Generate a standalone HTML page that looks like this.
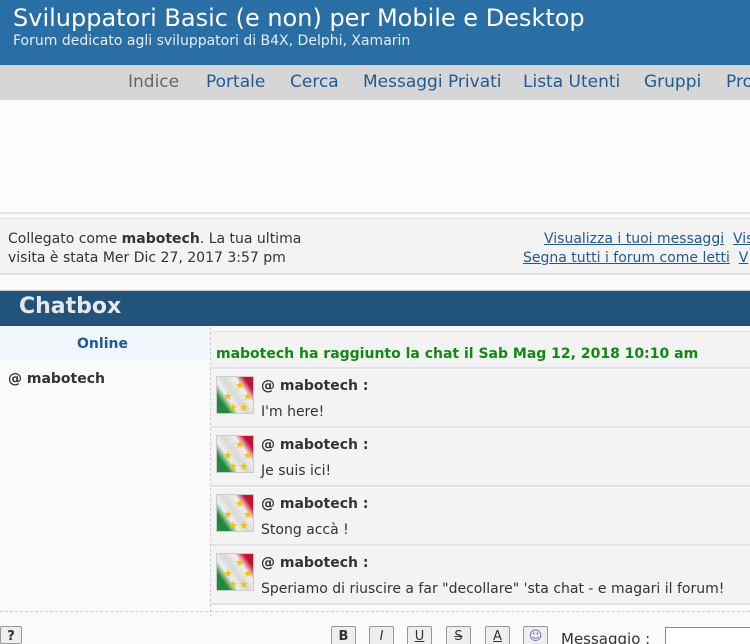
<!DOCTYPE html>
<html style="overflow:hidden"><head><meta charset="utf-8"><style>
*{margin:0;padding:0;box-sizing:border-box}
html,body{width:750px;height:644px;overflow:hidden}
body{background:#fafafa;font-family:"DejaVu Sans","Liberation Sans",sans-serif;position:relative;color:#333}
#w{position:absolute;left:0;top:0;width:750px;height:644px;overflow:hidden}
.a{position:absolute;white-space:nowrap}
#hd{left:0;top:0;width:750px;height:65px;background:#2a6ea6}
#nav{left:0;top:65px;width:750px;height:35px;background:#d6d6d6;font-size:17px;color:#1f5a94;overflow:hidden}
#nav span{position:absolute;top:7px}
.lk{color:#1f5a94;text-decoration:underline}
.msg{left:211px;width:539px;height:58px;background:#f3f3f3;border-bottom:2px solid #dde3ea}
.av{position:absolute;left:5px;top:6px;width:38px;height:38px;border:1px solid #ccc;background:linear-gradient(235deg,#c8102e 0,#c8102e 15%,#f0f0f0 30%,#d8d8d8 50%,#f0f0f0 65%,#1f8a3a 80%,#1f8a3a 100%)}
.av i{position:absolute;color:#f2c200;font-size:11px;font-style:normal}
.nm{position:absolute;left:50px;top:8px;font-weight:bold;font-size:14px;color:#333}
.tx{position:absolute;left:50px;top:34px;font-size:14px;color:#333}
.btn{position:absolute;top:626px;width:25px;height:22px;border:1px solid #999;background:#eee;font-size:13px;text-align:center;line-height:20px;border-radius:2px}
</style></head><body><div id="w">
<div class="a" id="hd"></div>
<div class="a" style="left:13px;top:4px;font-size:24px;color:#fff">Sviluppatori Basic (e non) per Mobile e Desktop</div>
<div class="a" style="left:13px;top:33px;font-size:14px;color:#e4eef7">Forum dedicato agli sviluppatori di B4X, Delphi, Xamarin</div>
<div class="a" id="nav"><span style="left:128px;color:#666">Indice</span><span style="left:206px">Portale</span><span style="left:290px">Cerca</span><span style="left:363px">Messaggi Privati</span><span style="left:523px">Lista Utenti</span><span style="left:644px">Gruppi</span><span style="left:726px">Pro</span></div>
<div class="a" style="left:0;top:102px;width:750px;height:112px;background:#fcfcfc;border-bottom:2px solid #e4e4e4"></div>
<div class="a" style="left:0;top:218px;width:750px;height:57px;background:#f3f3f3;border-top:1px solid #ddd;border-bottom:2px solid #ddd"></div>
<div class="a" style="left:8px;top:230px;font-size:14px;line-height:19px">Collegato come <b>mabotech</b>. La tua ultima<br>visita è stata Mer Dic 27, 2017 3:57 pm</div>
<div class="a" style="left:544px;top:231px;font-size:14px"><span class="lk">Visualizza i tuoi messaggi</span>&nbsp; <span class="lk">Vis</span></div>
<div class="a" style="left:523px;top:250px;font-size:14px"><span class="lk">Segna tutti i forum come letti</span>&nbsp; <span class="lk">V</span></div>
<div class="a" style="left:0;top:290px;width:750px;height:36px;background:#22547b;border-top:1px solid #ccc"></div>
<div class="a" style="left:19px;top:294px;font-size:22px;font-weight:bold;color:#e8e8e8">Chatbox</div>
<div class="a" style="left:0;top:327px;width:210px;height:33px;background:#f0f6fb"></div>
<div class="a" style="left:0;top:336px;width:205px;text-align:center;font-size:14px;font-weight:bold;color:#1f5a94">Online</div>
<div class="a" style="left:8px;top:371px;font-size:14px;font-weight:bold">@ mabotech</div>
<div class="a" style="left:210px;top:327px;height:290px;border-left:1px dashed #ccc"></div>
<div class="a" style="left:211px;top:331px;width:539px;height:38px;background:#f3f3f3;border-top:1px solid #dde3ea;border-bottom:2px solid #dde3ea"></div>
<div class="a" style="left:216px;top:346px;font-size:14px;font-weight:bold;color:#108a10">mabotech ha raggiunto la chat il Sab Mag 12, 2018 10:10 am</div>
<div class="a msg" style="top:370px"><div class="av"><i style="left:18px;top:2px">★</i><i style="left:6px;top:13px">★</i><i style="left:26px;top:13px">★</i><i style="left:11px;top:24px">★</i><i style="left:22px;top:24px">★</i></div><div class="nm">@ mabotech :</div><div class="tx">I'm here!</div></div>
<div class="a msg" style="top:429px"><div class="av"><i style="left:18px;top:2px">★</i><i style="left:6px;top:13px">★</i><i style="left:26px;top:13px">★</i><i style="left:11px;top:24px">★</i><i style="left:22px;top:24px">★</i></div><div class="nm">@ mabotech :</div><div class="tx">Je suis ici!</div></div>
<div class="a msg" style="top:488px"><div class="av"><i style="left:18px;top:2px">★</i><i style="left:6px;top:13px">★</i><i style="left:26px;top:13px">★</i><i style="left:11px;top:24px">★</i><i style="left:22px;top:24px">★</i></div><div class="nm">@ mabotech :</div><div class="tx">Stong accà !</div></div>
<div class="a msg" style="top:547px"><div class="av"><i style="left:18px;top:2px">★</i><i style="left:6px;top:13px">★</i><i style="left:26px;top:13px">★</i><i style="left:11px;top:24px">★</i><i style="left:22px;top:24px">★</i></div><div class="nm">@ mabotech :</div><div class="tx">Speriamo di riuscire a far "decollare" 'sta chat - e magari il forum!</div></div>
<div class="a" style="left:0;top:611px;width:750px;border-top:1px dashed #ccc"></div>
<div class="btn" style="left:0;width:22px;height:18px;font-weight:bold">?</div>
<div class="btn" style="left:331px;font-weight:bold">B</div>
<div class="btn" style="left:369px;font-style:italic">I</div>
<div class="btn" style="left:407px;text-decoration:underline">U</div>
<div class="btn" style="left:446px;text-decoration:line-through">S</div>
<div class="btn" style="left:485px;text-decoration:underline">A</div>
<div class="btn" style="left:523px;color:#66c">☺</div>
<div class="a" style="left:561px;top:630px;font-size:15px">Messaggio :</div>
<div class="a" style="left:665px;top:627px;width:85px;height:22px;border:1px solid #888;border-right:none;background:#fff"></div>
</div></body></html>
